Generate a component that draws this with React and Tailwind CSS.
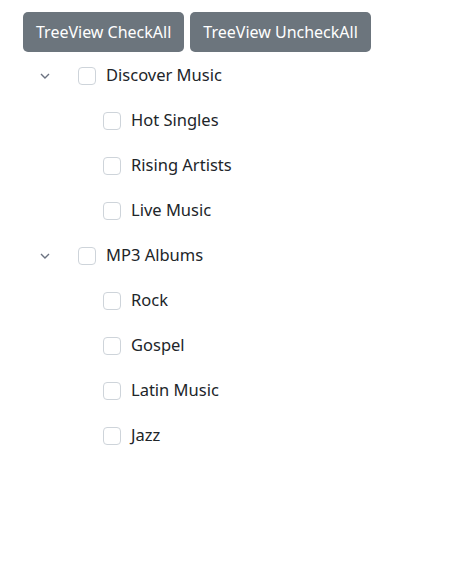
import React, { useState } from "react";

const tree = [
  { id: "discover", label: "Discover Music", children: [
    { id: "hot", label: "Hot Singles" },
    { id: "rising", label: "Rising Artists" },
    { id: "live", label: "Live Music" },
  ] },
  { id: "mp3", label: "MP3 Albums", children: [
    { id: "rock", label: "Rock" },
    { id: "gospel", label: "Gospel" },
    { id: "latin", label: "Latin Music" },
    { id: "jazz", label: "Jazz" },
  ] },
];

function Chevron() {
  return (
    <svg width="12" height="8" viewBox="0 0 12 8" fill="none" stroke="#6b7280" strokeWidth="1.4">
      <path d="M2 2l4 4 4-4" />
    </svg>
  );
}

function Box({ checked, onChange }) {
  return (
    <button
      onClick={onChange}
      className={
        "w-[18px] h-[18px] rounded-[4px] border flex items-center justify-center shrink-0 " +
        (checked ? "bg-[#0d6efd] border-[#0d6efd]" : "bg-white border-[#ced4da]")
      }
    >
      {checked && (
        <svg width="12" height="12" viewBox="0 0 12 12" fill="none" stroke="white" strokeWidth="2">
          <path d="M2.5 6.5l2.5 2.5 4.5-5" />
        </svg>
      )}
    </button>
  );
}

export default function App() {
  const [checked, setChecked] = useState({});
  const allIds = tree.flatMap((n) => [n.id, ...n.children.map((c) => c.id)]);
  const setAll = (v) => setChecked(Object.fromEntries(allIds.map((id) => [id, v])));
  const toggle = (id) => setChecked((s) => ({ ...s, [id]: !s[id] }));

  return (
    <div className="pt-[12px] pl-[23px] text-[16.5px] text-[#212529]" style={{ fontFamily: '"Noto Sans", sans-serif' }}>
      <div className="flex gap-[6px] text-[16px]">
        <button onClick={() => setAll(true)} className="h-[40px] px-[13px] rounded-[5px] bg-[#6c757d] text-white">
          TreeView CheckAll
        </button>
        <button onClick={() => setAll(false)} className="h-[40px] px-[13px] rounded-[5px] bg-[#6c757d] text-white">
          TreeView UncheckAll
        </button>
      </div>
      <ul className="mt-[1px]">
        {tree.map((node) => (
          <li key={node.id}>
            <div className="h-[45px] flex items-center">
              <span className="w-[55px] pl-[16px] flex items-center"><Chevron /></span>
              <Box checked={!!checked[node.id]} onChange={() => toggle(node.id)} />
              <span className="ml-[10px]">{node.label}</span>
            </div>
            <ul>
              {node.children.map((c) => (
                <li key={c.id} className="h-[45px] flex items-center pl-[80px]">
                  <Box checked={!!checked[c.id]} onChange={() => toggle(c.id)} />
                  <span className="ml-[10px]">{c.label}</span>
                </li>
              ))}
            </ul>
          </li>
        ))}
      </ul>
    </div>
  );
}
